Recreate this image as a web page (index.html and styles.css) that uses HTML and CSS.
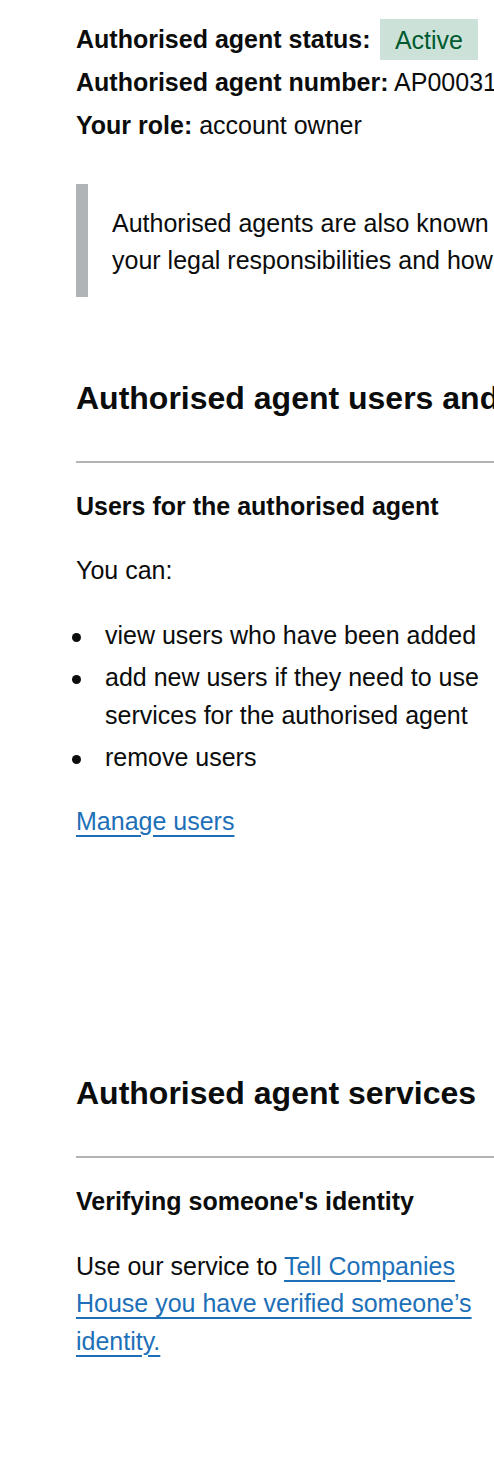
FILE: index.html
```html
<!DOCTYPE html>
<html lang="en">
<head>
    <meta charset="UTF-8">
    <title>Authorised agent account</title>
    <link rel="stylesheet" href="styles.css">
</head>
<body>
    <main class="page">
        <div class="summary">
            <p><strong>Authorised agent status:</strong> <span class="tag tag-green">Active</span></p>
            <p><strong>Authorised agent number:</strong> AP000312</p>
            <p><strong>Your role:</strong> account owner</p>
        </div>

        <div class="inset">
            Authorised agents are also known as ACSPs. Find out more about<br>
            your legal responsibilities and how to keep your details up to date.
        </div>

        <section class="section section-users">
            <h2 class="heading-l">Authorised agent users and details</h2>
            <hr class="section-break">
            <div class="grid-row">
                <div class="column-half">
                    <h3 class="heading-s">Users for the authorised agent</h3>
                    <p>You can:</p>
                    <ul class="bullets">
                        <li>view users who have been added</li>
                        <li>add new users if they need to use services for the authorised agent</li>
                        <li>remove users</li>
                    </ul>
                    <p><a class="link" href="#">Manage users</a></p>
                </div>
            </div>
        </section>

        <section class="section">
            <h2 class="heading-l">Authorised agent services</h2>
            <hr class="section-break">
            <div class="grid-row">
                <div class="column-half">
                    <h3 class="heading-s">Verifying someone's identity</h3>
                    <p>Use our service to <a class="link" href="#">Tell Companies House you have verified someone’s identity.</a></p>
                </div>
            </div>
        </section>
    </main>
</body>
</html>
```

FILE: styles.css
```css
html {
    overflow-x: hidden;
}
body {
    margin: 0;
    font-family: "Liberation Sans", Arial, sans-serif;
    font-size: 25px;
    line-height: 37.5px;
    color: #0b0c0c;
    background: #ffffff;
}
.page {
    width: 1100px;
    padding: 21px 0 60px 76px;
}
p {
    margin: 0 0 27px;
}
.summary p {
    margin: 0 0 5.5px;
}
.tag {
    margin-left: 3px;
    padding: 6.5px 14.5px;
}
.tag-green {
    background-color: #cce2d8;
    color: #005a30;
}
.inset {
    margin: 39px 0 81px;
    padding: 21px 0 17px 24px;
    border-left: 12px solid #b1b4b6;
}
.heading-l {
    margin: 0;
    font-size: 32px;
    line-height: 40px;
    font-weight: 700;
}
.section-break {
    margin: 43px 0 25px;
    border: 0;
    border-top: 2px solid #b1b4b6;
}
.heading-s {
    margin: 0 0 27px;
    font-size: 25px;
    line-height: 37.5px;
    font-weight: 700;
}
.grid-row {
    display: grid;
    grid-template-columns: 429px 429px;
    column-gap: 40px;
}
.bullets {
    margin: 0 0 26px;
    padding-left: 29px;
    list-style: none;
}
.bullets li {
    position: relative;
    margin-bottom: 5px;
}
.bullets li::before {
    content: "";
    position: absolute;
    left: -33px;
    top: 16px;
    width: 9px;
    height: 9px;
    border-radius: 50%;
    background: #0b0c0c;
}
.link {
    color: #1d70b8;
    text-decoration: underline;
    text-decoration-thickness: 2px;
    text-underline-offset: 5px;
}
.section-users {
    margin-bottom: 206px;
}
```
